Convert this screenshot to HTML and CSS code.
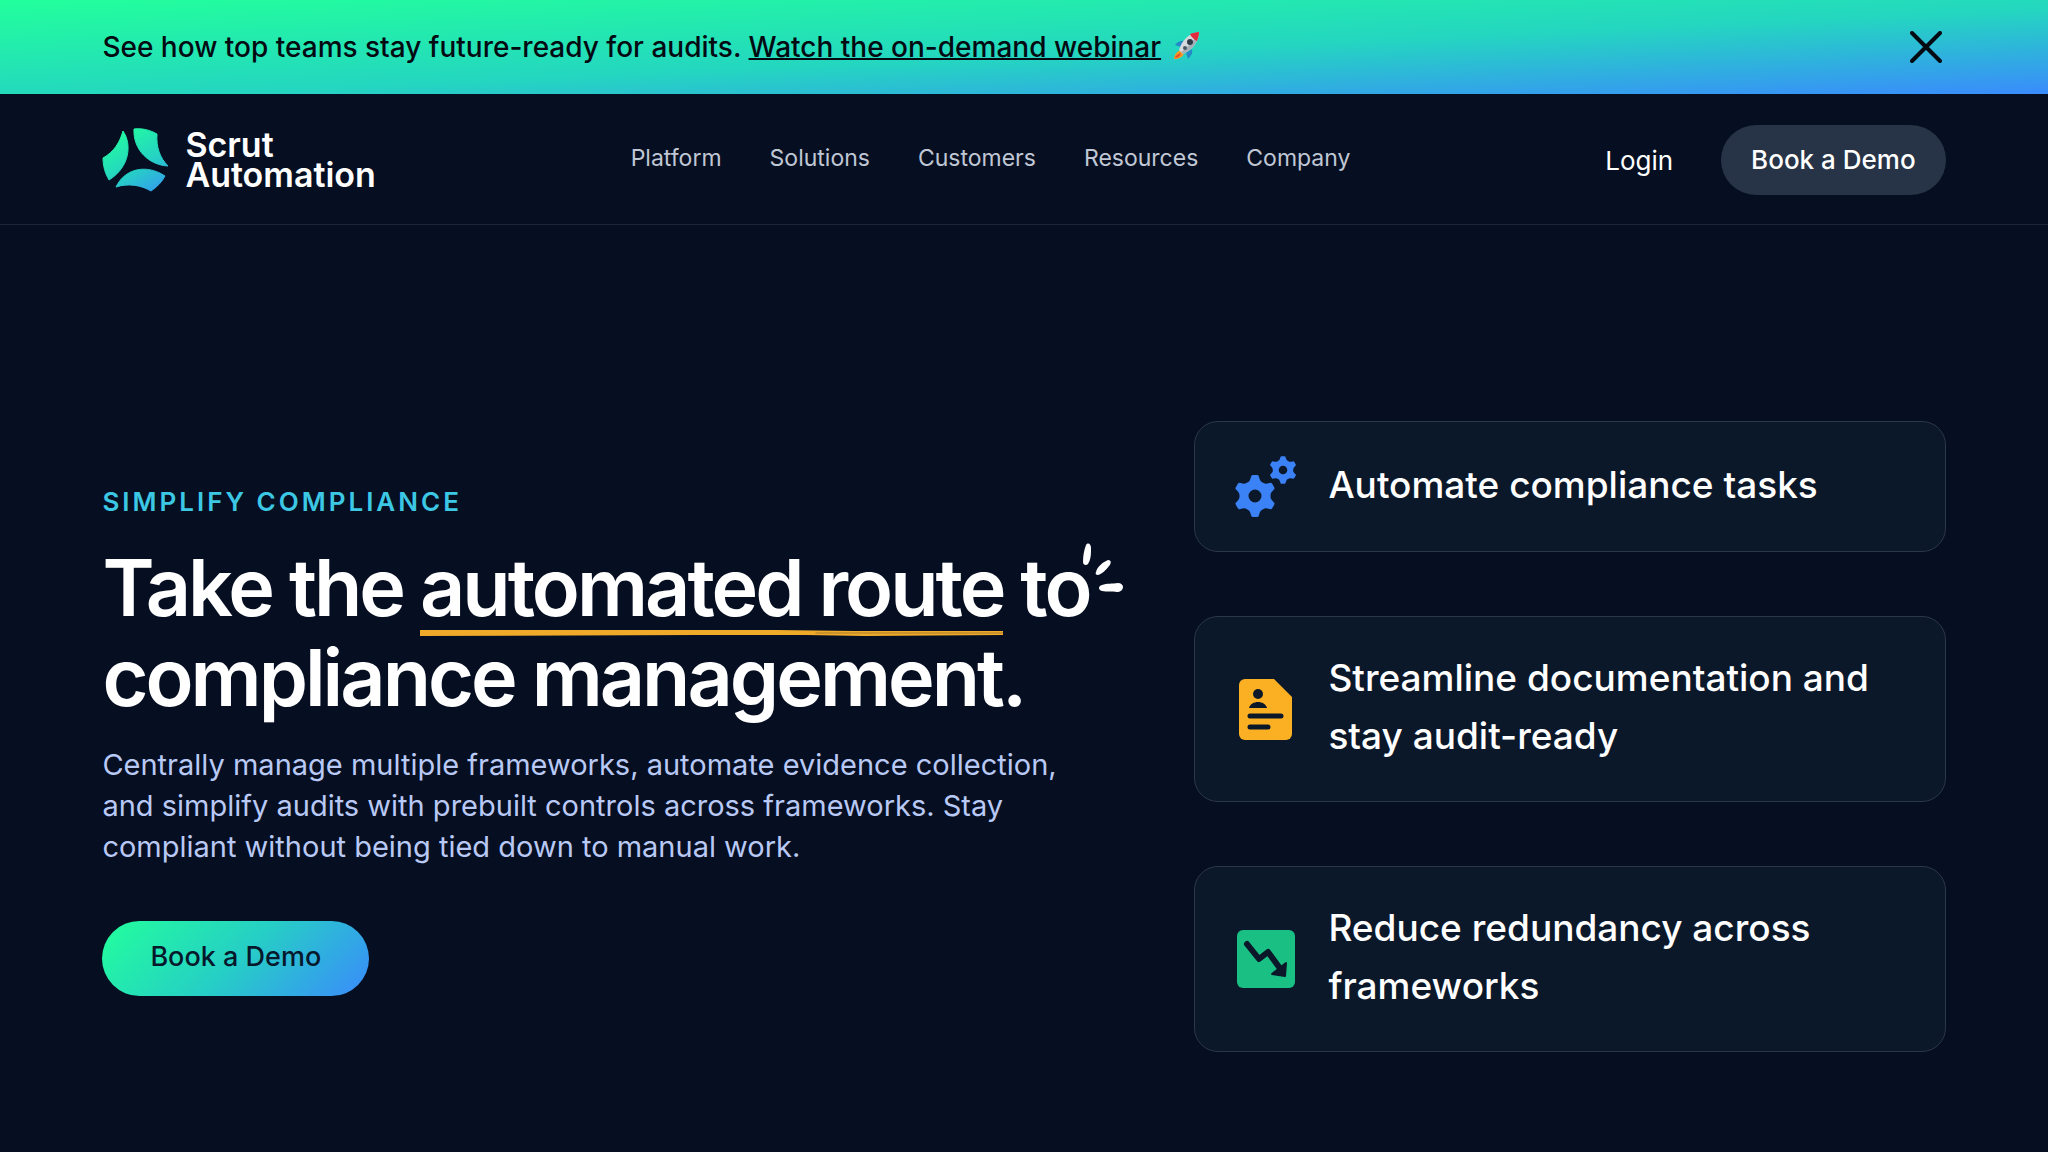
FILE: index.html
```html
<!doctype html>
<html lang="en">
<head>
    <meta charset="UTF-8">
    <meta name="viewport" content="width=device-width, initial-scale=1">
    <title>Scrut Automation</title>

    <link rel="stylesheet" href="styles.css">
</head>
<body>

<div class="banner" id="banner">
    <p class="banner__text">
        See how top teams stay future-ready for audits.
        <a href="#webinar" class="banner__link">Watch the on-demand webinar</a>
        <svg class="banner__rocket" viewBox="0 0 28 30" aria-hidden="true">
            <path d="M13 10C8 9 4 11 2 14l6 2zM19 18c1 4-1 7-4 10l-2-6z" fill="#2587c8"/>
            <path d="M8 19c-4 1-7 5-7 9 5 0 9-2 10-6z" fill="#f59a23"/>
            <path d="M7 22c-2 1-5 3-5 5 3 0 5-2 6-4z" fill="#e8512d"/>
            <path d="M6 19C9 9 16 2 26 1c0 10-7 18-16 22z" fill="#d5d9de"/>
            <path d="M8 21C13 18 21 10 26 1c0 10-7 18-16 22z" fill="#a6aeb8"/>
            <path d="M17 3c3-1 6-2 9-2 0 3-1 6-2 9-2-1-6-4-7-7z" fill="#e02b3c"/>
            <circle cx="17" cy="11" r="3" fill="#2d3a48"/>
            <circle cx="12" cy="17" r="2" fill="#4a5766"/>
        </svg>
    </p>
    <button type="button" class="banner__close" id="bannerClose" aria-label="Close">
        <svg viewBox="0 0 32 32" width="32" height="32" aria-hidden="true">
            <path d="M2 2l28 28M30 2L2 30" fill="none" stroke="#040a12" stroke-width="4" stroke-linecap="round"/>
        </svg>
    </button>
</div>

<header class="header">
    <a href="#" class="logo">
        <svg class="logo__mark" viewBox="0 0 67 64" aria-hidden="true">
            <defs>
                <linearGradient id="logoFill" x1="14" y1="0" x2="58" y2="76" gradientUnits="userSpaceOnUse">
                    <stop offset="0" stop-color="#22ff9c"/>
                    <stop offset=".5" stop-color="#25d3c3"/>
                    <stop offset="1" stop-color="#3a8bfc"/>
                </linearGradient>
            </defs>
            <g fill="url(#logoFill)" stroke="url(#logoFill)" stroke-width="1" stroke-linejoin="round">
                <path d="M21 3c9 13 7 36-14 49C3 45 1 38 1 30 12 24 18 14 21 3z"/>
                <path d="M32 1c8-1 16 1 23 5-1 13 3 24 11 32C47 37 31 22 32 1z"/>
                <path d="M14 59c9-19 31-23 49-11-3 6-8 11-14 15-10-6-23-8-35-4z"/>
            </g>
        </svg>
        <span class="logo__name">Scrut<br>Automation</span>
    </a>

    <nav class="nav">
        <a href="#platform" class="nav__link">Platform</a>
        <a href="#solutions" class="nav__link">Solutions</a>
        <a href="#customers" class="nav__link">Customers</a>
        <a href="#resources" class="nav__link">Resources</a>
        <a href="#company" class="nav__link">Company</a>
    </nav>

    <div class="header__actions">
        <a href="#login" class="login">Login</a>
        <button type="button" class="btn btn--dark">Book a Demo</button>
    </div>
</header>

<main class="hero">
    <section class="hero__content">
        <p class="hero__label">SIMPLIFY COMPLIANCE</p>
        <h1 class="hero__title">
            Take the
            <span class="underlined">automated route<svg class="underlined__line" viewBox="0 0 590 8" preserveAspectRatio="none" aria-hidden="true">
                <path d="M0 1l180 0 180 0 80 1 150 0v4l-140 1-60-1-110 0-280 1z" fill="#f0aa2a"/>
                <path d="M400 4l190 0" stroke="#a87c2c" stroke-width="1"/>
            </svg></span>
            <span class="sparked">to<svg class="sparked__rays" viewBox="0 0 42 52" aria-hidden="true">
                <path d="M4 2c2-3 5-1 5 3 0 6 0 11-3 16-2 2-5 1-5-2 0-6 1-12 3-17z"/>
                <path d="M14 29c1-5 7-10 12-12 4 0 3 4 1 6-3 4-7 8-11 9-2 0-3-1-2-3z"/>
                <path d="M20 42c5-2 10-1 16-2 3 0 5 2 5 4 0 3-3 5-6 5-5-1-10 0-15-1-4-1-4-5 0-6z"/>
            </svg></span>
            compliance management.
        </h1>
        <p class="hero__text">Centrally manage multiple frameworks, automate evidence collection, and simplify audits with prebuilt controls across frameworks. Stay compliant without being tied down to manual work.</p>
        <button type="button" class="btn btn--gradient">Book a Demo</button>
    </section>

    <ul class="features">
        <li class="feature">
            <svg class="feature__icon" viewBox="0 0 61 61" aria-hidden="true">
                <defs>
                    <path id="tooth" d="M-9-12q4-2 5-7 0-2 2-2h4q2 0 2 2 1 5 5 7z"/>
                    <g id="gear" fill="#3b82f6">
                        <circle r="11" fill="none" stroke="#3b82f6" stroke-width="9"/>
                        <use href="#tooth"/>
                        <use href="#tooth" transform="rotate(60)"/>
                        <use href="#tooth" transform="rotate(120)"/>
                        <use href="#tooth" transform="rotate(180)"/>
                        <use href="#tooth" transform="rotate(240)"/>
                        <use href="#tooth" transform="rotate(300)"/>
                    </g>
                </defs>
                <use href="#gear" transform="translate(20 40)"/>
                <use href="#gear" transform="translate(48 14) scale(.66)"/>
            </svg>
            <h2 class="feature__title">Automate compliance tasks</h2>
        </li>
        <li class="feature">
            <svg class="feature__icon" viewBox="0 0 61 61" aria-hidden="true">
                <path d="M10 0h29l18 18v37a6 6 0 0 1-6 6H10a6 6 0 0 1-6-6V6a6 6 0 0 1 6-6z" fill="#fbb024"/>
                <circle cx="23" cy="15" r="5" fill="#0b182a"/>
                <path d="M14 29c2-8 16-8 18 0z" fill="#0b182a"/>
                <path d="M15 37h31M15 48h18" stroke="#0b182a" stroke-width="5" stroke-linecap="round"/>
            </svg>
            <h2 class="feature__title">Streamline documentation and stay audit-ready</h2>
        </li>
        <li class="feature">
            <svg class="feature__icon" viewBox="0 0 61 61" aria-hidden="true">
                <rect x="2" y="1" width="58" height="58" rx="6" fill="#1abf83"/>
                <path d="M12 15l12 15 9-7 11 15" fill="none" stroke="#0b182a" stroke-width="6" stroke-linecap="round" stroke-linejoin="round"/>
                <path d="M51 34l-1 13-13-2z" fill="#0b182a" stroke="#0b182a" stroke-width="2" stroke-linejoin="round"/>
            </svg>
            <h2 class="feature__title">Reduce redundancy across frameworks</h2>
        </li>
    </ul>
</main>

<script>
    (function() {
        var banner = document.querySelector('#banner'),
            bannerClose = document.querySelector('#bannerClose');

        bannerClose.addEventListener('click', function() {
            banner.style.display = 'none';
        });
    })();
</script>

</body>
</html>
```
FILE: styles.css
```css
* {
    box-sizing: border-box;
    margin: 0;
    padding: 0;
}

body {
    background-color: #060f22;
    color: #fff;
    font-family: Inter, "Liberation Sans", sans-serif;
}

a {
    color: inherit;
    text-decoration: none;
}

button {
    border: 0;
    font-family: inherit;
    cursor: pointer;
}

.banner {
    display: flex;
    align-items: center;
    justify-content: space-between;
    padding: 24px 5%;
    background: linear-gradient(to bottom right, #22ff9c, #24d6c0 55%, #3a8bfc);
    color: #040a12;
}

.banner__text {
    font-size: 28px;
    font-weight: 500;
    line-height: 46px;
}

.banner__link {
    text-decoration: underline;
    text-decoration-thickness: 2px;
}

.banner__rocket {
    width: 28px;
    height: 30px;
    margin-left: 4px;
    vertical-align: -4px;
}

.banner__close {
    padding: 4px;
    background: none;
    line-height: 0;
}

.header {
    display: flex;
    align-items: center;
    justify-content: space-between;
    padding: 31px 5% 29px;
    border-bottom: 1px solid #1b2538;
}

.logo {
    display: flex;
    align-items: center;
    gap: 16px;
}

.logo__mark {
    width: 67px;
    height: 64px;
}

.logo__name {
    font-size: 34px;
    font-weight: 600;
    line-height: 30px;
}

.nav {
    display: flex;
    gap: 48px;
    padding-bottom: 4px;
}

.nav__link {
    color: #c0c7d4;
    font-size: 23px;
}

.header__actions {
    display: flex;
    align-items: center;
    gap: 48px;
}

.login {
    font-size: 26px;
}

.btn {
    border-radius: 40px;
    font-size: 26px;
    font-weight: 500;
}

.btn--dark {
    padding: 0 30px;
    background-color: #273346;
    color: #fff;
    line-height: 70px;
}

.btn--gradient {
    padding: 0 48px 4px;
    background: linear-gradient(135deg, #22ff9c, #26cfc5 50%, #3a8bfc);
    color: #06182c;
    font-size: 27px;
    line-height: 71px;
}

.hero {
    display: grid;
    grid-template-columns: 1028px 1fr;
    gap: 64px;
    align-items: center;
    padding: 196px 5% 96px;
}

.hero__content {
    padding-top: 4px;
}

.hero__label {
    margin-bottom: 20px;
    color: #3cc8e4;
    font-size: 26px;
    font-weight: 600;
    letter-spacing: 3px;
    line-height: 40px;
}

.hero__title {
    margin-bottom: 22px;
    font-size: 79px;
    font-weight: 600;
    letter-spacing: -3px;
    line-height: 90px;
}

.underlined,
.sparked {
    position: relative;
    white-space: nowrap;
}

.underlined__line {
    position: absolute;
    left: 0;
    bottom: -2px;
    width: 100%;
    height: 8px;
}

.sparked__rays {
    position: absolute;
    left: 100%;
    top: 4px;
    width: 42px;
    height: 52px;
    margin-left: -8px;
    fill: #fff;
}

.hero__text {
    max-width: 980px;
    margin-bottom: 54px;
    color: #b9c9f5;
    font-size: 29px;
    line-height: 41px;
}

.features {
    display: grid;
    gap: 64px;
    list-style: none;
}

.feature {
    display: flex;
    align-items: center;
    gap: 32px;
    padding: 34px 40px;
    border: 1px solid #2c3749;
    border-radius: 24px;
    background-color: #0b182a;
}

.feature__icon {
    flex-shrink: 0;
    width: 61px;
    height: 61px;
}

.feature__title {
    margin: -2px 0 2px;
    font-size: 37px;
    font-weight: 500;
    line-height: 58px;
}
```
